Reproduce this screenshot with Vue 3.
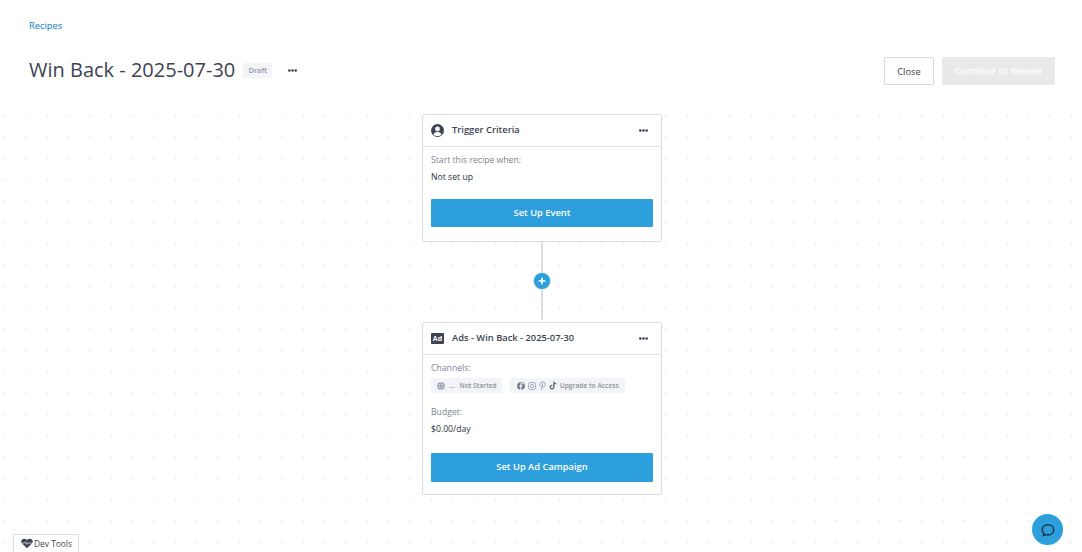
<script setup>
</script>

<template>
  <div class="page">
    <header class="top">
      <a class="crumb">Recipes</a>
      <div class="title-row">
        <div class="title-left">
          <h1>Win Back - 2025-07-30</h1>
          <span class="draft">Draft</span>
          <svg class="more head-more" width="9" height="3" viewBox="0 0 9 3"><circle cx="1.300" cy="1.500" r="1.300" /><circle cx="4.500" cy="1.500" r="1.300" /><circle cx="7.700" cy="1.500" r="1.300" /></svg>
        </div>
        <div class="actions">
          <button class="btn-close">Close</button>
          <button class="btn-review">Continue to Review</button>
        </div>
      </div>
    </header>

    <main class="canvas">
      <section class="card">
        <div class="card-head">
          <svg class="head-icon" width="13" height="13" viewBox="0 0 13 13">
            <circle cx="6.5" cy="6.5" r="6.5" fill="#3d4354" />
            <circle cx="6.5" cy="5" r="2.4" fill="#fff" />
            <path d="M2.4 10.6c.7-1.7 2.3-2.5 4.1-2.5s3.400.8 4.100 2.500c-1.100 1-2.500 1.500-4.100 1.500s-3-.5-4.100-1.500z" fill="#fff" />
          </svg>
          <span class="card-title">Trigger Criteria</span>
          <svg class="more" width="9" height="3" viewBox="0 0 9 3"><circle cx="1.300" cy="1.500" r="1.300" /><circle cx="4.500" cy="1.500" r="1.300" /><circle cx="7.700" cy="1.500" r="1.300" /></svg>
        </div>
        <div class="card-body">
          <div class="label">Start this recipe when:</div>
          <div class="value">Not set up</div>
          <button class="btn-primary first-btn">Set Up Event</button>
        </div>
      </section>

      <div class="connector">
        <span class="plus">
          <svg width="8" height="8" viewBox="0 0 8 8"><path d="M4 1.200v5.600M1.200 4h5.600" stroke="#fff" stroke-width="1.600" stroke-linecap="round" /></svg>
        </span>
      </div>

      <section class="card">
        <div class="card-head">
          <span class="ad-icon">Ad</span>
          <span class="card-title">Ads - Win Back - 2025-07-30</span>
          <svg class="more" width="9" height="3" viewBox="0 0 9 3"><circle cx="1.300" cy="1.500" r="1.300" /><circle cx="4.500" cy="1.500" r="1.300" /><circle cx="7.700" cy="1.500" r="1.300" /></svg>
        </div>
        <div class="card-body">
          <div class="label">Channels:</div>
          <div class="chips">
            <span class="chip">
              <svg width="8" height="8" viewBox="0 0 10 10">
                <circle cx="5" cy="5" r="4.700" fill="#8f95a5" />
                <path d="M.5 3.500h9M.5 6.500h9M5 .3c-2.600 2.800-2.600 6.600 0 9.400M5 .3c2.600 2.800 2.600 6.600 0 9.400" stroke="#f3f4f8" stroke-width=".6" fill="none" />
              </svg>
              <span class="ell">...</span>
              <span>Not Started</span>
            </span>
            <span class="chip wide">
              <svg width="8" height="8" viewBox="0 0 9 9">
                <circle cx="4.500" cy="4.500" r="4.300" fill="#6d7486" />
                <path d="M5 9V5.300h1.200l.2-1.400H5v-.8c0-.4.200-.7.700-.7h.8V1.200H5.400C4.200 1.200 3.600 2 3.600 3v.9H2.500v1.400h1.100V9z" fill="#f3f4f8" />
              </svg>
              <svg width="8" height="8" viewBox="0 0 9 9" fill="none" stroke="#9298a8">
                <rect x=".6" y=".6" width="7.800" height="7.800" rx="2.200" stroke-width=".9" />
                <circle cx="4.500" cy="4.500" r="1.800" stroke-width=".9" />
              </svg>
              <svg width="7" height="9" viewBox="0 0 8 10" fill="none" stroke="#9298a8" stroke-width="1">
                <path d="M1 5.500C.2 3.200 1.600 1 4 1c2 0 3.300 1.300 3.100 3-.2 1.700-1.200 2.700-2.400 2.600-.8-.1-1.200-.6-1.300-1.200M4.200 3 2.800 9.500" stroke-linecap="round" />
              </svg>
              <svg width="8" height="9" viewBox="0 0 9 10">
                <path d="M5 .5h1.300c.1 1.100.8 1.800 2 1.900v1.300c-.8 0-1.400-.2-2-.6v3.200C6.300 8.100 5.100 9.500 3.300 9.500 1.700 9.500.6 8.300.6 6.800c0-1.700 1.500-2.900 3.200-2.600v1.400c-.8-.3-1.700.2-1.700 1.100 0 .8.600 1.300 1.200 1.300.8 0 1.400-.5 1.400-1.400z" fill="#5f6679" />
              </svg>
              <span>Upgrade to Access</span>
            </span>
          </div>
          <div class="label budget">Budget:</div>
          <div class="value">$0.00/day</div>
          <button class="btn-primary second-btn">Set Up Ad Campaign</button>
        </div>
      </section>
    </main>

    <div class="dev-tools">
      <svg width="12" height="11" viewBox="0 0 14 12">
        <path d="M7 11.500 1.300 6C-.2 4.500 0 2.200 1.500 1.100 3-.1 5.300.2 7 2c1.700-1.800 4-2.100 5.500-.9C14 2.200 14.200 4.500 12.700 6z" fill="#3d4354" />
        <path d="M1.500 5.500h3l1-1.500 1.500 3 1.200-1.500h4.300" fill="none" stroke="#fff" stroke-width=".8" />
      </svg>
      <span>Dev Tools</span>
    </div>

    <button class="chat">
      <svg width="16" height="16" viewBox="0 0 16 16" fill="none">
        <path d="M4.100 11.800C2.700 10.700 2.100 9.400 2.200 7.900 2.400 4.900 4.800 2.800 8 2.800c3.200 0 5.700 2.200 5.700 5.100 0 2.900-2.500 5.100-5.700 5.100-.9 0-1.700-.1-2.300-.4l-2.500.9z" stroke="#1c3342" stroke-width="1.500" stroke-linejoin="round" />
      </svg>
    </button>
  </div>
</template>

<style>
html, body { margin: 0; background: #fff; }
</style>

<style scoped>
.page {
  position: relative;
  height: 552px;
  overflow: hidden;
  font-family: "Open Sans", "Noto Sans", sans-serif;
  color: #3d4354;
}
.top { padding: 19px 27px 0 29px; height: 105px; box-sizing: border-box; }
.crumb { display: block; font-size: 9.330px; line-height: 14px; color: #0a84c6; }
.title-row { display: flex; justify-content: space-between; align-items: center; margin-top: 13px; height: 48px; }
.title-left { display: flex; align-items: center; }
h1 { margin: 0; font-size: 20px; font-weight: 400; line-height: 28px; color: #3d4354; }
.draft {
  margin-left: 8px; width: 29px; height: 15px; line-height: 14px; text-align: center;
  background: #f3f4f8; border-radius: 2px; font-size: 7.500px; font-weight: 600; color: #9298a8;
}
.more { flex: none; fill: #3d4354; }
.head-more { margin-left: 16px; margin-top: 1px; }
.actions { display: flex; gap: 8px; margin-top: 2px; }
.actions button { height: 28px; font-family: inherit; font-size: 9.330px; border-radius: 1px; padding: 0; }
.btn-close { width: 50px; background: #fff; border: 1px solid #d9dadd; color: #3d4354; font-weight: 500; }
.actions .btn-review { width: 113px; background: #e9e9e9; border: 0; color: #fff; font-weight: 600; padding-bottom: 2px; }
.canvas {
  height: 447px;
  padding-top: 9px;
  padding-left: 2px;
  box-sizing: border-box;
  display: flex;
  flex-direction: column;
  align-items: center;
  background-image: radial-gradient(circle, #e8e9eb 0.6px, rgba(255, 255, 255, 0) 0.9px);
  background-size: 21.330px 21.330px;
  background-position: -6px 0;
}
.card {
  width: 240px; box-sizing: border-box; background: #fff;
  border: 1px solid #dcdde0; border-radius: 2px;
}
.card-head {
  display: flex; align-items: center; height: 32px; box-sizing: border-box;
  padding: 0 13px 1px 8px; border-bottom: 1px solid #e2e3e6;
}
.head-icon { flex: none; }
.card-title { flex: 1; margin-left: 8px; font-size: 9.330px; font-weight: 600; color: #3d4354; line-height: 12px; }
.ad-icon {
  width: 13px; height: 11px; line-height: 11px; text-align: center; background: #3d4354;
  border-radius: 1px; color: #fff; font-size: 7px; font-weight: 700;
}
.card-body { padding: 7px 8px 14px; }
.label { font-size: 8.670px; line-height: 13px; color: #7e8494; }
.value { font-size: 8.670px; line-height: 13px; margin-top: 4px; color: #2c3140; }
.btn-primary {
  display: block; width: 222px; background: #2d9fdd; border: 0; border-radius: 1px; color: #fff;
  font-family: inherit; font-size: 9.330px; font-weight: 600; padding: 0;
}
.first-btn { height: 28px; margin-top: 15px; padding-bottom: 2px; }
.second-btn { height: 29px; margin-top: 17px; margin-bottom: -2px; padding-bottom: 2px; }
.connector {
  position: relative; width: 2px; height: 78px; margin-top: 0; margin-bottom: 2px;
  background: #dcdde0; display: flex; align-items: center; justify-content: center;
}
.plus {
  flex: none; width: 16px; height: 16px; border-radius: 50%; background: #2d9fdd;
  display: flex; align-items: center; justify-content: center;
  box-shadow: 0 0 0 1px #d6e3ec;
}
.chips { display: flex; gap: 8px; margin-top: 3px; }
.chip {
  display: inline-flex; align-items: center; height: 15px; padding: 0 5px 0 6px; gap: 3px;
  background: #f3f4f8; border-radius: 2px; font-size: 6.670px; font-weight: 600; color: #8b91a1;
  white-space: nowrap;
}
.chip.wide { gap: 3px; padding: 0 6px 0 7px; }
.ell { margin: 0 2px 0 1px; }
.budget { margin-top: 13px; }
.dev-tools {
  position: absolute; left: 13px; bottom: 0; height: 18px; width: 66px; box-sizing: border-box;
  background: #fff; border: 1px solid #dcdde0; border-bottom: 0;
  display: flex; align-items: center; gap: 1px; padding-left: 7px;
  font-size: 8.400px; font-weight: 500; color: #3d4354;
}
.chat {
  position: absolute; left: 1032px; top: 514px; width: 31px; height: 31px; padding: 0;
  border: 0; border-radius: 50%; background: #2d9fdd;
  display: flex; align-items: center; justify-content: center;
}
</style>
